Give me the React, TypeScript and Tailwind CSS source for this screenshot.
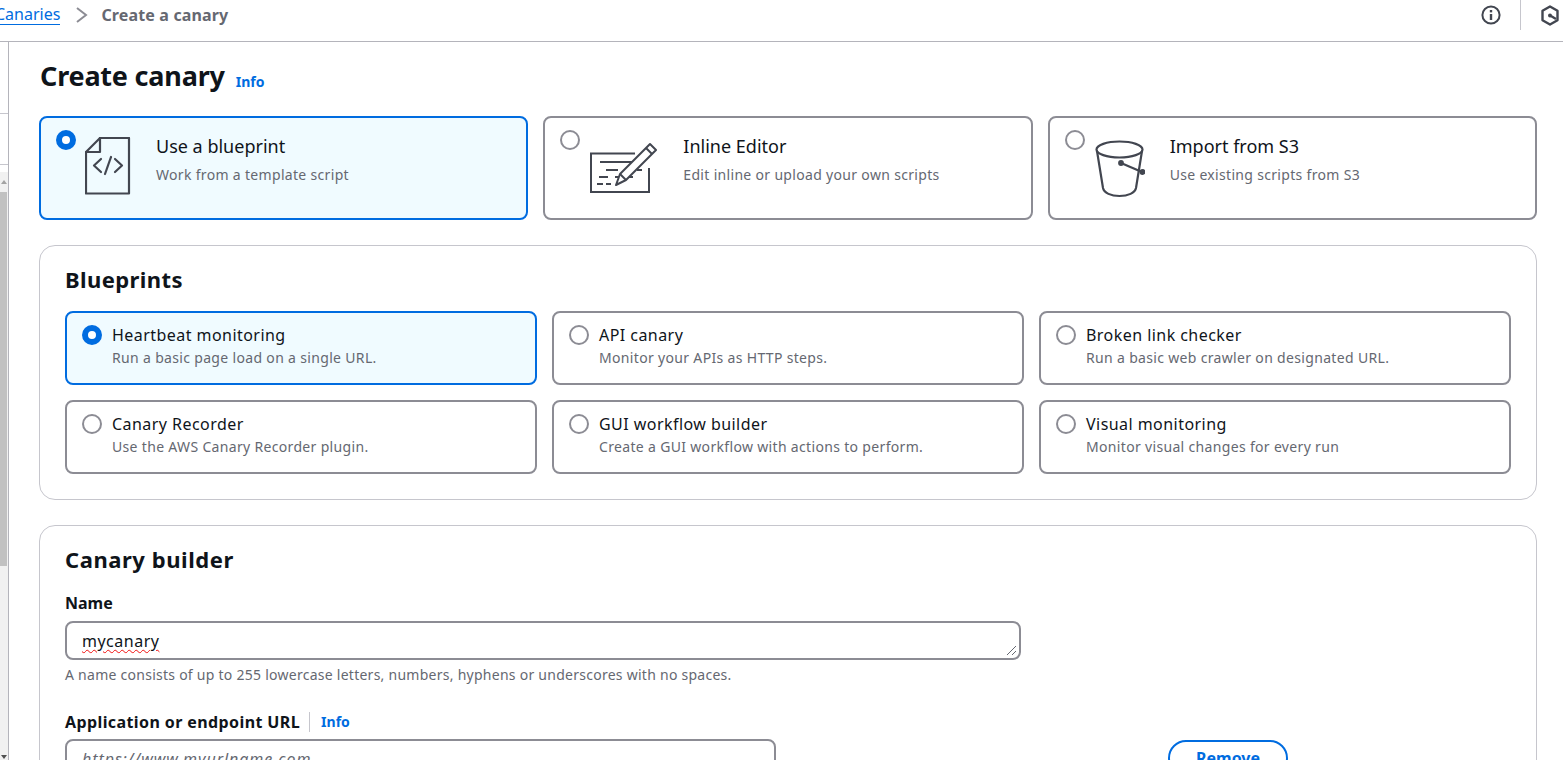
import React from 'react'

const FONT = 'font-["Noto_Sans",sans-serif]'

function Radio({ checked }: { checked?: boolean }) {
  if (checked) {
    return <span className="block h-5 w-5 shrink-0 rounded-full border-[6px] border-[#006ce0] bg-white" />
  }
  return <span className="block h-5 w-5 shrink-0 rounded-full border-2 border-[#8c8c94] bg-white" />
}

function FileCodeIcon() {
  return (
    <svg width="46" height="58" viewBox="0 0 46 58" fill="none" stroke="#424650" strokeWidth="2.2" strokeLinejoin="round" strokeLinecap="round">
      <path d="M15 1H44V56.5H1V15L15 1Z" />
      <path d="M15 1V15H1" />
      <path d="M16 22L9 28.5L16 35" />
      <path d="M30 22L37 28.5L30 35" />
      <path d="M26 20L20 37" />
    </svg>
  )
}

function EditorIcon() {
  return (
    <svg width="68" height="52" viewBox="0 0 68 52" fill="none" stroke="#424650" strokeWidth="2">
      <path d="M46 11.5H2V50H60V26" />
      <path d="M11 20H48" />
      <path d="M17 28H29M48 28H53" />
      <path d="M10 35H19M26 35H44" />
      <path d="M8 42H14M17 42H22" />
      <path d="M61 2L67 8L37 38L27 43L31 32L61 2Z" strokeLinejoin="round" fill="white" />
      <path d="M57 6L63 12" />
      <path d="M31 32L37 38" />
    </svg>
  )
}

function BucketIcon() {
  return (
    <svg width="50" height="58" viewBox="0 0 50 58" fill="none" stroke="#424650" strokeWidth="2.2" strokeLinecap="round">
      <ellipse cx="24.5" cy="9.5" rx="23" ry="8" />
      <path d="M2 11L8 48C9 53 16 56 24.5 56C33 56 40 53 41 48L47 11" />
      <path d="M26 23L47 32" />
      <circle cx="26" cy="23" r="1.8" fill="#424650" />
      <circle cx="47.5" cy="32" r="1.8" fill="#424650" />
    </svg>
  )
}

function InfoLink({ className = '' }: { className?: string }) {
  return <a className={`text-[14px] leading-5 font-bold text-[#006ce0] ${className}`}>Info</a>
}

function MethodCard({
  checked,
  title,
  desc,
  icon,
  iconClass,
  textClass,
}: {
  checked?: boolean
  title: string
  desc: string
  icon: React.ReactNode
  iconClass: string
  textClass: string
}) {
  return (
    <div
      className={`flex h-[104px] items-start rounded-lg border-2 pl-[15px] pt-[12px] ${
        checked ? 'border-[#006ce0] bg-[#f0fbff]' : 'border-[#8c8c94] bg-white'
      }`}
    >
      <Radio checked={checked} />
      <div className={iconClass}>{icon}</div>
      <div className={textClass}>
        <div className="text-[18px] leading-[22px] text-[#0f141a]">{title}</div>
        <div className="mt-[8px] text-[14px] leading-5 tracking-[0.32px] text-[#656871]">{desc}</div>
      </div>
    </div>
  )
}

function BlueprintTile({ checked, title, desc }: { checked?: boolean; title: string; desc: string }) {
  return (
    <div
      className={`flex h-[74px] items-start gap-[10px] rounded-lg border-2 pl-[15px] pt-[12px] ${
        checked ? 'border-[#006ce0] bg-[#f0fbff]' : 'border-[#8c8c94] bg-white'
      }`}
    >
      <Radio checked={checked} />
      <div>
        <div className="text-[16px] leading-5 tracking-[0.45px] text-[#0f141a]">{title}</div>
        <div className="mt-[3px] text-[14px] leading-5 tracking-[0.33px] text-[#656871]">{desc}</div>
      </div>
    </div>
  )
}

export default function App() {
  return (
    <div className={`flex h-[760px] w-[1563px] flex-col overflow-hidden bg-white ${FONT}`}>
      <header className="flex h-[42px] shrink-0 items-start border-b border-[#b4b4bb]">
        <a className="ml-[-5px] mt-[5px] border-b border-[#006ce0] text-[16px] leading-[19px] text-[#006ce0]">Canaries</a>
        <svg className="ml-[15px] mt-[7px]" width="14" height="16" viewBox="0 0 14 16" fill="none" stroke="#8c8c94" strokeWidth="2">
          <path d="M2 1L11 8L2 15" />
        </svg>
        <span className="ml-[12px] mt-[5px] text-[16px] leading-[20px] font-bold tracking-[0.15px] text-[#656871]">Create a canary</span>
        <svg className="ml-auto mt-[5px]" width="20" height="20" viewBox="0 0 20 20" fill="none" stroke="#424650" strokeWidth="2">
          <circle cx="10" cy="10" r="8.6" />
          <path d="M10 9V15" strokeWidth="2.4" />
          <path d="M10 5V7.4" strokeWidth="2.4" />
        </svg>
        <div className="ml-[19px] h-[30px] w-px bg-[#c6c6cd]" />
        <svg className="ml-[20px] mr-[4px] mt-[5px]" width="18" height="21" viewBox="0 0 18 21" fill="none" stroke="#424650" strokeWidth="2.4" strokeLinejoin="round">
          <path d="M9 1.5L16.5 5.8V15.2L9 19.5L1.5 15.2V5.8L9 1.5Z" />
          <circle cx="9" cy="10.5" r="2" fill="#424650" stroke="none" />
          <path d="M10 11L15 14" />
        </svg>
      </header>

      <div className="flex min-h-0 flex-1">
        <aside className="flex w-[9px] shrink-0 flex-col border-r border-[#b4b4bb]">
          <div className="h-[72px] shrink-0 border-b border-[#c6c6cd]" />
          <div className="h-[51px] shrink-0 border-b border-[#c6c6cd]" />
          <div className="h-[7px] shrink-0" />
          <div className="flex h-[20px] shrink-0 items-center justify-center bg-[#f1f1f1]">
            <svg width="6" height="4" viewBox="0 0 6 4" fill="#a3a3a3"><path d="M3 0L6 4H0Z" /></svg>
          </div>
          <div className="flex h-[374px] shrink-0 bg-[#f1f1f1]">
            <div className="w-[7px] bg-[#c1c1c1]" />
          </div>
          <div className="flex flex-1 flex-col items-center justify-end bg-[#f1f1f1] pb-[1px]">
            <svg width="6" height="4" viewBox="0 0 6 4" fill="#505050"><path d="M3 4L6 0H0Z" /></svg>
          </div>
        </aside>

        <main className="min-w-0 flex-1 pl-[30px] pr-[26px]">
          <div className="flex h-[74px] items-start">
            <h1 className="ml-[1px] mt-[15px] text-[27px] leading-[38px] font-bold tracking-[-0.2px] text-[#0f141a]">Create canary</h1>
            <InfoLink className="ml-[11px] mt-[30px]" />
          </div>

          <div className="grid grid-cols-3 gap-[15px]">
            <MethodCard
              checked
              title="Use a blueprint"
              desc="Work from a template script"
              icon={<FileCodeIcon />}
              iconClass="ml-[9px] mt-[7px]"
              textClass="ml-[25px] mt-[5px]"
            />
            <MethodCard
              title="Inline Editor"
              desc="Edit inline or upload your own scripts"
              icon={<EditorIcon />}
              iconClass="ml-[9px] mt-[12px]"
              textClass="ml-[26px] mt-[5px]"
            />
            <MethodCard
              title="Import from S3"
              desc="Use existing scripts from S3"
              icon={<BucketIcon />}
              iconClass="ml-[10px] mt-[10px]"
              textClass="ml-[25px] mt-[5px]"
            />
          </div>

          <section className="mt-[25px] h-[255px] rounded-2xl border border-[#c6c6cd] px-[25px] pt-[16px]">
            <h2 className="text-[22px] leading-[34px] font-bold tracking-[0.4px] text-[#0f141a]">Blueprints</h2>
            <div className="mt-[15px] grid grid-cols-3 gap-[15px]">
              <BlueprintTile checked title="Heartbeat monitoring" desc="Run a basic page load on a single URL." />
              <BlueprintTile title="API canary" desc="Monitor your APIs as HTTP steps." />
              <BlueprintTile title="Broken link checker" desc="Run a basic web crawler on designated URL." />
              <BlueprintTile title="Canary Recorder" desc="Use the AWS Canary Recorder plugin." />
              <BlueprintTile title="GUI workflow builder" desc="Create a GUI workflow with actions to perform." />
              <BlueprintTile title="Visual monitoring" desc="Monitor visual changes for every run" />
            </div>
          </section>

          <section className="mt-[25px] h-[300px] rounded-2xl border border-[#c6c6cd] px-[25px] pt-[16px]">
            <h2 className="text-[22px] leading-[34px] font-bold tracking-[0.55px] text-[#0f141a]">Canary builder</h2>
            <label className="mt-[16px] block text-[16px] leading-[22px] font-bold text-[#0f141a]">Name</label>
            <div className="relative mt-[7px] flex h-[39px] w-[956px] items-center rounded-lg border-2 border-[#8c8c94] pl-[15px]">
              <span className="text-[16px] leading-5 tracking-[0.5px] text-[#0f141a] underline decoration-[#f01010] decoration-wavy decoration-1 underline-offset-2">mycanary</span>
              <svg className="absolute bottom-[1px] right-[1px]" width="12" height="12" viewBox="0 0 12 12" stroke="#656871" strokeWidth="1">
                <path d="M1 10L10 1M6 10L10 6" />
              </svg>
            </div>
            <p className="mt-[5px] text-[14px] leading-5 tracking-[0.26px] text-[#656871]">
              A name consists of up to 255 lowercase letters, numbers, hyphens or underscores with no spaces.
            </p>
            <div className="mt-[26px] flex items-center">
              <label className="text-[16px] leading-[22px] font-bold tracking-[0.4px] text-[#0f141a]">Application or endpoint URL</label>
              <span className="ml-[9px] h-[20px] w-px bg-[#c6c6cd]" />
              <InfoLink className="ml-[11px]" />
            </div>
            <div className="mt-[6px] flex items-start">
              <div className="flex h-[39px] w-[711px] items-center rounded-lg border-2 border-[#8c8c94] pl-[15px]">
                <span className="text-[16px] leading-5 tracking-[0.95px] text-[#656871] italic">https://www.myurlname.com</span>
              </div>
              <button className="ml-[392px] mt-[1px] h-[36px] w-[120px] rounded-[20px] border-2 border-[#006ce0] text-[16px] leading-5 font-bold text-[#006ce0]">
                Remove
              </button>
            </div>
          </section>
        </main>
      </div>
    </div>
  )
}
